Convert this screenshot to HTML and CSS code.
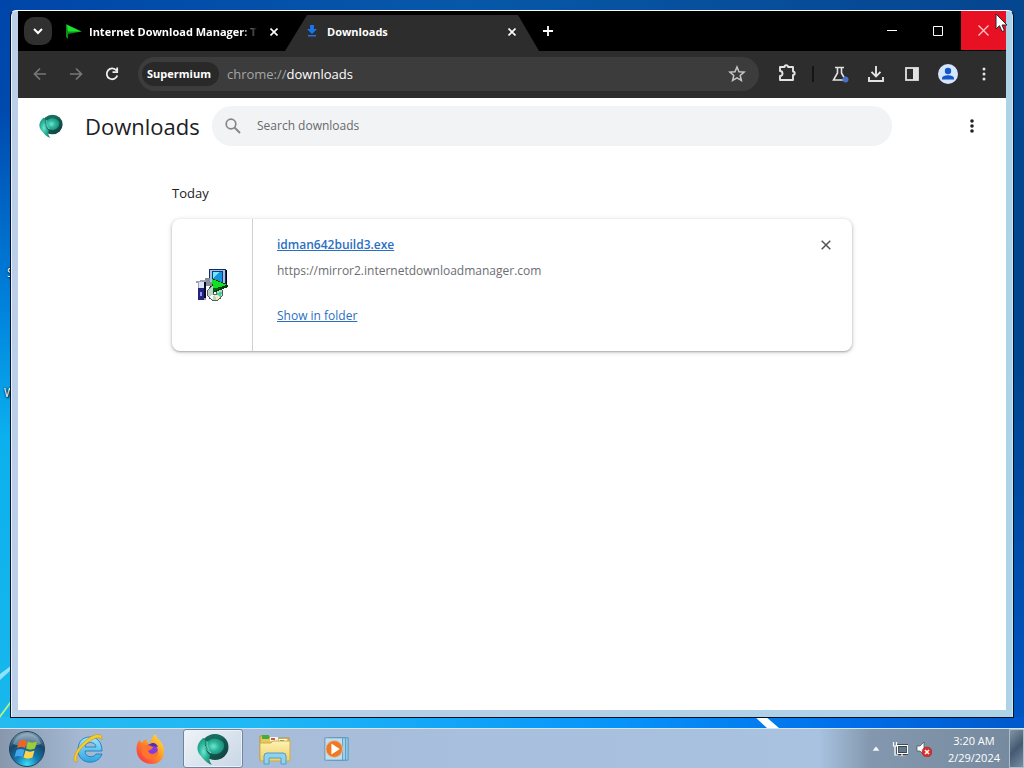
FILE: index.html
```html
<!DOCTYPE html>
<html lang="en">
<head>
<meta charset="utf-8">
<title>Downloads</title>
<link rel="stylesheet" href="styles.css">
</head>
<body>
<svg class="defs" width="0" height="0" aria-hidden="true">
  <defs>
    <radialGradient id="teal" cx=".42" cy=".5" r=".6"><stop offset="0" stop-color="#6ce8cf"/><stop offset=".5" stop-color="#2bb399"/><stop offset="1" stop-color="#1b8874"/></radialGradient>
    <linearGradient id="tealDark" x1="0" y1="0" x2="1" y2="1"><stop offset="0" stop-color="#23917c"/><stop offset=".55" stop-color="#12584e"/><stop offset="1" stop-color="#143b40"/></linearGradient>
    <radialGradient id="orb" cx=".5" cy=".95" r=".95"><stop offset="0" stop-color="#3fe0f4"/><stop offset=".35" stop-color="#1379b0"/><stop offset=".7" stop-color="#174668"/><stop offset="1" stop-color="#8ba8bc"/></radialGradient>
    <linearGradient id="fire" x1="1" y1="0" x2="0" y2="1"><stop offset="0" stop-color="#fff04a"/><stop offset=".45" stop-color="#ff9525"/><stop offset="1" stop-color="#f5214f"/></linearGradient>
    <linearGradient id="ie" x1="0" y1="0" x2="0" y2="1"><stop offset="0" stop-color="#9ce6ff"/><stop offset="1" stop-color="#2ea4e0"/></linearGradient>
    <linearGradient id="folder" x1="0" y1="0" x2="0" y2="1"><stop offset="0" stop-color="#fff2b0"/><stop offset="1" stop-color="#edcf6c"/></linearGradient>
    <symbol id="supermium" viewBox="0 0 32 32">
      <ellipse cx="18" cy="14" rx="13.500" ry="13" fill="url(#tealDark)"/>
      <path d="M6 5C-1 11-1 18 4 23c3 4 6 7 11 9-3-4-3-7-2-10C8 18 7 12 9 6z" fill="url(#teal)"/>
      <path d="M9 8c5-4 13-3 17 1 3 4 0 11-6 12-5 1-8-1-10-5-1-3-2-5-1-8z" fill="url(#teal)"/>
      <path d="M7 6c6-6 15-6 20 0-7-2-12-1-17 3z" fill="#176d5f"/>
      <path d="M10 8c0 5 1 9 4 12-3-1-5-4-6-7" fill="none" stroke="#8fe9d5" stroke-width=".6"/>
    </symbol>
  </defs>
</svg>

<main class="desktop">
  <span class="shortcut-label shortcut-first">S</span>
  <span class="shortcut-label shortcut-second">W</span>
  <svg class="streaks" viewBox="0 0 12 130" aria-hidden="true"><path d="M0 76l12-9v4L0 82z" fill="#8de3fb"/><path d="M0 117l12-16v3L0 120z" fill="#b6f28b"/></svg>
  <svg class="ray" viewBox="0 0 30 12" aria-hidden="true"><path d="M2 0h11l14 12H15z" fill="#fff"/></svg>

  <section class="window" aria-label="Supermium">
    <header class="titlebar">
      <button class="tab-search" aria-label="Search tabs"><svg width="10" height="8" viewBox="0 0 10 8"><path d="M1 2l4 4 4-4" fill="none" stroke="#fff" stroke-width="2"/></svg></button>
      <div class="tab">
        <svg class="favicon" viewBox="0 0 16 16"><path d="M0 0l16 7.500L2 10v5L0 13z" fill="#118b16"/><path d="M1 1l14 6.500H2z" fill="#19e72e"/></svg>
        <span class="tab-title fade">Internet Download Manager: T</span>
        <button class="tab-close" aria-label="Close tab"><svg width="8" height="8" viewBox="0 0 8 8"><path d="M.5.5l7 7m0-7l-7 7" stroke="#fff" stroke-width="1.600"/></svg></button>
      </div>
      <div class="tab active">
        <svg class="favicon" viewBox="0 0 16 16"><path d="M6 1h4v4h3l-5 5-5-5h3zM4 11h8v1.500H4z" fill="#1a73e8"/></svg>
        <span class="tab-title">Downloads</span>
        <button class="tab-close" aria-label="Close tab"><svg width="8" height="8" viewBox="0 0 8 8"><path d="M.5.5l7 7m0-7l-7 7" stroke="#fff" stroke-width="1.600"/></svg></button>
      </div>
      <button class="new-tab" aria-label="New tab"><svg width="10" height="10" viewBox="0 0 10 10"><path d="M5 0v10M0 5h10" stroke="#fff" stroke-width="1.800"/></svg></button>
      <div class="window-buttons">
        <button aria-label="Minimize"><svg width="10" height="10" viewBox="0 0 10 10"><path d="M0 4.500h10" stroke="#fff"/></svg></button>
        <button aria-label="Maximize"><svg width="10" height="10" viewBox="0 0 10 10"><path d="M.5.500h9v9h-9z" fill="none" stroke="#fff"/></svg></button>
        <button class="close" aria-label="Close"><svg width="11" height="11" viewBox="0 0 11 11"><path d="M.5.5l10 10m0-10l-10 10" stroke="#ffc9cd" stroke-width="1.200"/></svg></button>
      </div>
    </header>

    <nav class="toolbar" aria-label="Browser toolbar">
      <button aria-label="Back"><svg width="16" height="16" viewBox="0 0 16 16"><path d="M14 8H3m5-5.500L2.500 8 8 13.500" fill="none" stroke="#777" stroke-width="1.700"/></svg></button>
      <button aria-label="Forward"><svg width="16" height="16" viewBox="0 0 16 16"><path d="M2 8h11M8 2.500L13.500 8 8 13.500" fill="none" stroke="#777" stroke-width="1.700"/></svg></button>
      <button aria-label="Reload"><svg width="16" height="16" viewBox="0 0 16 16"><path d="M12.400 4.500A5.400 5.400 0 1 0 13.300 9.500M13.200 1.500v4.700H8.500" fill="none" stroke="#eee" stroke-width="1.800"/></svg></button>
      <div class="omnibox">
        <span class="chip">Supermium</span>
        <span class="url">chrome://<b>downloads</b></span>
        <button aria-label="Bookmark this tab"><svg width="18" height="18" viewBox="0 0 18 18"><path d="M9 2l2 4.700 5.100.4-3.900 3.400 1.200 5L9 12.900l-4.400 2.600 1.200-5L1.900 7.100 7 6.700z" fill="none" stroke="#c7c7c7" stroke-width="1.500"/></svg></button>
      </div>
      <button aria-label="Extensions"><svg width="20" height="20" viewBox="0 0 20 20"><path d="M3 3h4.500a1.800 1.800 0 0 1 3.600 0H16v4.500a1.700 1.700 0 0 1 0 3.400V16H3v-4a2.500 2.500 0 0 0 0-5z" fill="none" stroke="#e3e3e3" stroke-width="1.900" stroke-linejoin="round"/></svg></button>
      <span class="divider"></span>
      <button aria-label="Experiments"><svg width="20" height="20" viewBox="0 0 20 20"><path d="M5 3.500h9M7.500 3.500V9L3.500 16h12l-4-7V3.500" fill="none" stroke="#e3e3e3" stroke-width="1.600"/><circle cx="15.500" cy="15.500" r="3" fill="#4b6fc4"/></svg></button>
      <button aria-label="Downloads"><svg width="20" height="20" viewBox="0 0 20 20"><path d="M10 2v10M5.500 7.800L10 12.300l4.500-4.500M3 13v4h14v-4" fill="none" stroke="#e3e3e3" stroke-width="1.900"/></svg></button>
      <button aria-label="Side panel"><svg width="16" height="16" viewBox="0 0 16 16"><rect x="2" y="2" width="12" height="12" fill="none" stroke="#e3e3e3" stroke-width="1.800"/><path d="M9 2h5v12H9z" fill="#e3e3e3"/></svg></button>
      <button aria-label="Profile"><svg width="20" height="20" viewBox="0 0 20 20"><circle cx="10" cy="10" r="10" fill="#d5e5fb"/><circle cx="10" cy="7" r="3.200" fill="#1457c6"/><path d="M4 15.500v-1.300C4.300 12 7.500 11.200 10 11.200s5.700.8 6 3v1.300z" fill="#1457c6"/></svg></button>
      <button aria-label="Menu"><svg width="4" height="16" viewBox="0 0 4 16"><g fill="#e3e3e3"><circle cx="2" cy="3" r="1.500"/><circle cx="2" cy="8" r="1.500"/><circle cx="2" cy="13" r="1.500"/></g></svg></button>
    </nav>

    <div class="page">
      <header class="page-header">
        <div class="brand">
          <svg width="24" height="24"><use href="#supermium"/></svg>
          <h1>Downloads</h1>
        </div>
        <label class="search">
          <svg width="16" height="16" viewBox="0 0 16 16"><circle cx="6" cy="6" r="4.800" fill="none" stroke="#85888b" stroke-width="1.700"/><path d="M9.500 9.500l5.500 5.500" stroke="#85888b" stroke-width="2"/></svg>
          <input type="search" placeholder="Search downloads" aria-label="Search downloads">
        </label>
        <button class="more" aria-label="More actions"><svg width="4" height="16" viewBox="0 0 4 16"><g fill="#222"><circle cx="2" cy="3" r="1.800"/><circle cx="2" cy="8" r="1.800"/><circle cx="2" cy="13" r="1.800"/></g></svg></button>
      </header>
      <div class="downloads">
        <h2>Today</h2>
        <article class="card">
          <div class="file-icon">
            <svg width="32" height="32" viewBox="0 0 32 32" shape-rendering="crispEdges">
              <path d="M13 0h17v17H13z" fill="#122d63"/><path d="M14 1h15v15H14z" fill="#a8bfdf"/><path d="M16 2h11v12H16z" fill="#073e83"/><path d="M17 3h9v10h-9z" fill="#1794dc"/><path d="M17 3h6l-6 7z" fill="#73e5ff"/><path d="M30 1h1v17H14v-1h16z" fill="#000"/>
              <path d="M9 9h5v4h5v4H8z" fill="#888d95"/><path d="M0 12h3l1-1h6v20H2V14H0z" fill="#9ba1b8"/><path d="M3 13h5v6H3z" fill="#dfe4f4"/><path d="M2 19h6v12H2z" fill="#242576"/><path d="M4 23h2v4H4z" fill="#9292ff"/><path d="M8 13h2v16H8z" fill="#080829"/>
              <circle cx="19" cy="24" r="7.500" fill="#b9d6cb" stroke="#525c62"/><path d="M19 24l-6 4 3 3z" fill="#fff"/><path d="M19 24l6 4 1-5z" fill="#41d29c"/><path d="M19 24l1 7 4-2z" fill="#f5f0aa"/><circle cx="19" cy="24" r="2" fill="#fff" stroke="#666"/>
              <path d="M16 9l16 7v2L17 24z" fill="#073b0d"/><path d="M16 10l15 6-14 4z" fill="#13df25"/><path d="M17 19h8l-8 4z" fill="#061"/>
            </svg>
          </div>
          <div class="details">
            <a class="filename" href="#">idman642build3.exe</a>
            <p>https://mirror2.internetdownloadmanager.com</p>
            <a class="show" href="#">Show in folder</a>
          </div>
          <button class="remove" aria-label="Remove from list"><svg width="10" height="10" viewBox="0 0 10 10"><path d="M.7.700l8.600 8.600m0-8.600L.7 9.300" stroke="#505357" stroke-width="1.500"/></svg></button>
        </article>
      </div>
    </div>
  </section>
  <svg class="cursor" width="14" height="20" viewBox="0 0 14 20" aria-hidden="true"><path d="M1 1v15l3.500-3.300L7 18.500l2.500-1L7 12h5z" fill="#fff" stroke="#262632"/></svg>
</main>

<footer class="taskbar">
  <button class="start" aria-label="Start"><svg width="38" height="38" viewBox="0 0 38 38"><circle cx="19" cy="19" r="17.500" fill="url(#orb)" stroke="#22425a"/><path d="M5 14C9 0 29 0 33 14c-8 3-20 3-28 0z" fill="#d6e3ea" opacity=".38"/><path d="M11 12c3-2.500 5-2.500 8-1l-2 7c-3-1.500-5-1.500-8 0z" fill="#f26223"/><path d="M20 11.500c3 1.500 5 1.500 9 0l-2 7c-3 1.500-6 1.500-9 0z" fill="#9dcc35"/><path d="M8.500 20c3-1.500 5-1.500 8 0l-2 7c-3-1.500-5-1.500-8 0z" fill="#45a5ed"/><path d="M17.500 20.500c3 1.500 6 1.500 9 0l-2 7c-4 1.500-6 1.500-9 0z" fill="#ffd247"/></svg></button>
  <div class="apps">
    <button aria-label="Internet Explorer"><svg width="32" height="32" viewBox="0 0 32 32"><path d="M5 17C5 8 10 4 17 4s12 5 12 14H12c0 7 9 7 11 3h6c-4 12-24 11-24-4zm7-3h11c0-6-11-6-11 0z" fill="url(#ie)" stroke="#1775b0" stroke-width=".8"/><path d="M2 29c-4-5 4-17 14-24C23 0 30 0 29 7c-2-4-7-2-12 1C8 14 2 22 4 29z" fill="#f8cc2c" stroke="#c99416" stroke-width=".6"/></svg></button>
    <button aria-label="Firefox"><svg width="32" height="32" viewBox="0 0 32 32"><path d="M4 7l3 3c2-3 4-4 5-4-1 3 1 4 3 5 1-6 3-8 6-10 0 4 3 5 5 8 6 8 3 22-9 22C3 31-2 17 4 7z" fill="url(#fire)"/><circle cx="16" cy="18" r="7" fill="#853cdb"/><path d="M7 14c4-4 8-1 11 0-1 3-4 3-5 4 2 4 7 4 10-1 0 7-4 9-8 9-6 0-10-6-8-12z" fill="#ff752d"/><path d="M14 12c4-4 8-1 9 2l-5-1z" fill="#4a32aa"/></svg></button>
    <button class="running" aria-label="Supermium"><svg width="32" height="32"><use href="#supermium"/></svg></button>
    <button aria-label="Windows Explorer"><svg width="32" height="32" viewBox="0 0 32 32"><path d="M1 3h9l1 2h19v22H1z" fill="#e8c75b" stroke="#b79633"/><path d="M3 2h7v4H3z" fill="#40ae45"/><path d="M11 4h8v4h-8z" fill="#ecf4ff"/><path d="M12 5h4v2h-4z" fill="#db592f"/><path d="M20 6h8v4h-8z" fill="#fff"/><path d="M21 7h4v2h-4z" fill="#369ad3"/><path d="M1 10h11l2-2h17v20H1z" fill="url(#folder)" stroke="#cfab46"/><path d="M5 31V23q0-3 3-3h16q3 0 3 3v8h-5v-6H10v6z" fill="#91d1ed" stroke="#4c9fc9"/></svg></button>
    <button aria-label="Windows Media Player"><svg width="28" height="28" viewBox="0 0 30 30"><path d="M9 3h18v24H9z" fill="#8ec8e8" stroke="#5a94ba"/><path d="M6 3h18v24H6z" fill="#a8d5ef" stroke="#5a94ba"/><path d="M2 3h19v24H2z" fill="#c2dded" stroke="#5a94ba"/><circle cx="12" cy="15" r="9" fill="#ef7821" stroke="#d9c4b7"/><path d="M9 9l9 6-9 6z" fill="#fff"/></svg></button>
  </div>
  <div class="tray">
    <button aria-label="Show hidden icons"><svg width="8" height="5" viewBox="0 0 8 5"><path d="M4 0l4 5H0z" fill="#f5f8fb" stroke="#526b83" stroke-width=".4"/></svg></button>
    <button aria-label="Network"><svg width="16" height="16" viewBox="0 0 16 16"><path d="M5.500 4.500h10v8h-10zM10 13v2M7 15h7" fill="#66788a" stroke="#2b3640" stroke-width="2.600"/><path d="M5.500 4.500h10v8h-10zM10 13v2M7 15h7M1.500 1v4h3V1M3 5v9h3" fill="none" stroke="#fff" stroke-width="1.200"/></svg></button>
    <button aria-label="Volume muted"><svg width="16" height="16" viewBox="0 0 16 16"><path d="M1 5h3l4-4v13l-4-4H1z" fill="#fff" stroke="#3c4a57" stroke-width=".7"/><circle cx="11" cy="11" r="5" fill="#d92f2b" stroke="#9f2322" stroke-width=".5"/><path d="M9 9l4 4m0-4l-4 4" stroke="#fff" stroke-width="1.500"/></svg></button>
    <time class="clock" datetime="2024-02-29T03:20"><span>3:20 AM</span><span>2/29/2024</span></time>
  </div>
  <button class="show-desktop" aria-label="Show desktop"></button>
</footer>
</body>
</html>
```

FILE: styles.css
```css
* { box-sizing: border-box; }

body {
  margin: 0;
  height: 100vh;
  display: flex;
  flex-direction: column;
  overflow: hidden;
  font: 12px/18px "Open Sans", "Noto Sans", sans-serif;
  color: #202124;
}

button {
  display: flex;
  align-items: center;
  justify-content: center;
  flex: none;
  padding: 0;
  border: 0;
  background: none;
  font: inherit;
}

.defs { position: absolute; }

.desktop {
  position: relative;
  flex: 1;
  min-height: 0;
  display: flex;
  padding: 10px;
  background:
    linear-gradient(90deg, #25baf0, #20b8f5 25%, #0794fa 60%, #0070ea 82%, #0058cc) bottom / 100% 11px no-repeat,
    linear-gradient(#0046aa, #0049ad 15%, #0082dc 42%, #0bb0ee 60%, #18b8ec) left / 12px 100% no-repeat,
    linear-gradient(#05478f, #00458f 50%, #0055c5) right / 12px 100% no-repeat,
    linear-gradient(90deg, #0046aa, #0758a9 45%, #06458f);
}

.shortcut-label {
  position: absolute;
  color: #fff;
  text-shadow: 1px 1px 2px #000, 0 0 2px #000;
}
.shortcut-first { left: 7px; top: 264px; }
.shortcut-second { left: 4px; top: 384px; }
.streaks { position: absolute; left: 0; bottom: 0; width: 12px; }
.ray { position: absolute; left: 752px; bottom: 0; width: 30px; }
.cursor { position: absolute; top: 13px; right: 15px; }

.window {
  position: relative;
  flex: 1;
  min-width: 0;
  display: flex;
  flex-direction: column;
  padding: 0 7px 7px;
  border: 1px solid #06131e;
  border-top-color: #fff;
  border-radius: 6px 6px 0 0;
  background: linear-gradient(90deg, #bccfe9, #b3cfe7 40%, #add3e8);
  box-shadow: inset 1px 0 #e5f2ff, inset -1px 0 #bdeaff;
}

.titlebar {
  display: flex;
  align-items: center;
  height: 40px;
  flex: none;
  padding-left: 6px;
  background: #000;
}
.tab-search {
  width: 28px;
  height: 28px;
  border-radius: 10px;
  background: #303030;
}
.tab {
  display: flex;
  align-items: center;
  flex: 0 1 233px;
  min-width: 0;
  height: 36px;
  align-self: flex-end;
  padding: 0 3px 3px 14px;
  color: #fff;
  font-size: 11px;
  font-weight: 700;
}
.tab.active {
  flex-basis: 254px;
  padding: 0 19px 3px;
  background: #2d2d2d;
  clip-path: polygon(22px 0, calc(100% - 21px) 0, 100% 100%, 0 100%);
}
.favicon { width: 16px; height: 16px; flex: none; }
.tab-title {
  flex: 1;
  min-width: 0;
  margin: 0 8px 0 7px;
  overflow: hidden;
  white-space: nowrap;
}
.fade { mask-image: linear-gradient(90deg, #000 90%, transparent); }
.tab-close { width: 16px; height: 16px; }
.new-tab { width: 18px; height: 28px; }
.window-buttons { display: flex; align-self: flex-start; margin-left: auto; }
.window-buttons button { width: 46px; height: 39px; }
.window-buttons .close { width: 45px; background: #e81123; }

.toolbar {
  display: flex;
  align-items: center;
  height: 47px;
  flex: none;
  padding: 0 4px 1px;
  background: #2d2d2d;
}
.toolbar button { width: 36px; height: 34px; }
.omnibox {
  flex: 1;
  min-width: 0;
  display: flex;
  align-items: center;
  height: 34px;
  margin: 0 10px 0 8px;
  padding: 0 4px;
  border-radius: 17px;
  background: #3c3c3c;
}
.chip {
  padding: 3px 8px 3px 5px;
  border-radius: 12px;
  background: #292929;
  color: #fff;
  font-size: 11px;
  font-weight: 700;
}
.url {
  flex: 1;
  margin-left: 8px;
  color: #a5a5a5;
  font-size: 13px;
}
.url b { color: #fff; font-weight: 400; }
.divider { width: 2px; height: 16px; margin: 0 8px 0 7px; background: #151515; }

.page { flex: 1; min-height: 0; background: #fff; }
.page-header { display: flex; align-items: center; height: 56px; }
.brand {
  display: flex;
  align-items: center;
  flex: none;
  width: 194px;
  padding-left: 21px;
  gap: 22px;
}
h1 { margin: 0; font-size: 22px; line-height: 32px; font-weight: 400; }
.search {
  display: flex;
  align-items: center;
  flex: 0 1 680px;
  height: 40px;
  padding: 0 13px;
  gap: 16px;
  border-radius: 20px;
  background: #f1f3f4;
}
.search input {
  flex: 1;
  min-width: 0;
  padding: 0;
  border: 0;
  outline: 0;
  background: none;
  font: inherit;
}
.search input::placeholder { color: #66696d; opacity: 1; }
.more { width: 32px; height: 32px; margin: 0 18px 0 auto; }

.downloads { max-width: 680px; margin: 29px auto 0; }
h2 { margin: 0 0 16px; font-size: 13px; line-height: 20px; font-weight: 400; }
.card {
  display: flex;
  border-radius: 8px;
  background: #fff;
  box-shadow: 0 1px 2px rgba(60, 64, 67, .36), 0 1px 4px 1px rgba(60, 64, 67, .16);
}
.file-icon {
  display: flex;
  align-items: center;
  justify-content: center;
  width: 81px;
  border-right: 1px solid #d0d0d0;
}
.details { flex: 1; min-width: 0; padding: 16px 24px 25px; line-height: 20px; }
.details a { color: #2a6fc4; }
.details p { margin: 6px 0 25px; color: #6b6e72; }
.filename { font-weight: 600; }
.remove { width: 20px; height: 20px; margin: 16px 16px 0 0; }

.taskbar {
  display: flex;
  align-items: center;
  height: 40px;
  flex: none;
  border-top: 1px solid #d5e5f4;
  box-shadow: 0 -1px #234e70;
  background: linear-gradient(90deg, #8798ad, #a5b9d4 8%, #a8bfdd 45%, #a8c2df 80%, #8398ae 85%, #75899e);
}
.start { width: 54px; }
.apps { display: flex; align-self: stretch; margin-left: 5px; gap: 2px; }
.apps button { width: 60px; }
.apps .running {
  border: 1px solid #7285a0;
  border-radius: 3px;
  background: linear-gradient(135deg, #eef3f7, #c8d6e5);
  box-shadow: inset 0 0 0 1px #e9f2f9;
}
.tray { display: flex; align-items: center; margin-left: auto; gap: 8px; }
.tray button:first-child { margin-right: 4px; }
.clock {
  display: flex;
  flex-direction: column;
  align-items: center;
  margin: 0 9px 0 8px;
  color: #fff;
  font-size: 11px;
  line-height: 17px;
}
.show-desktop {
  align-self: stretch;
  width: 15px;
  border: 1px solid #aebdcb;
  background: linear-gradient(135deg, #8395a7, #455a70 50%, #768da4);
}
```
